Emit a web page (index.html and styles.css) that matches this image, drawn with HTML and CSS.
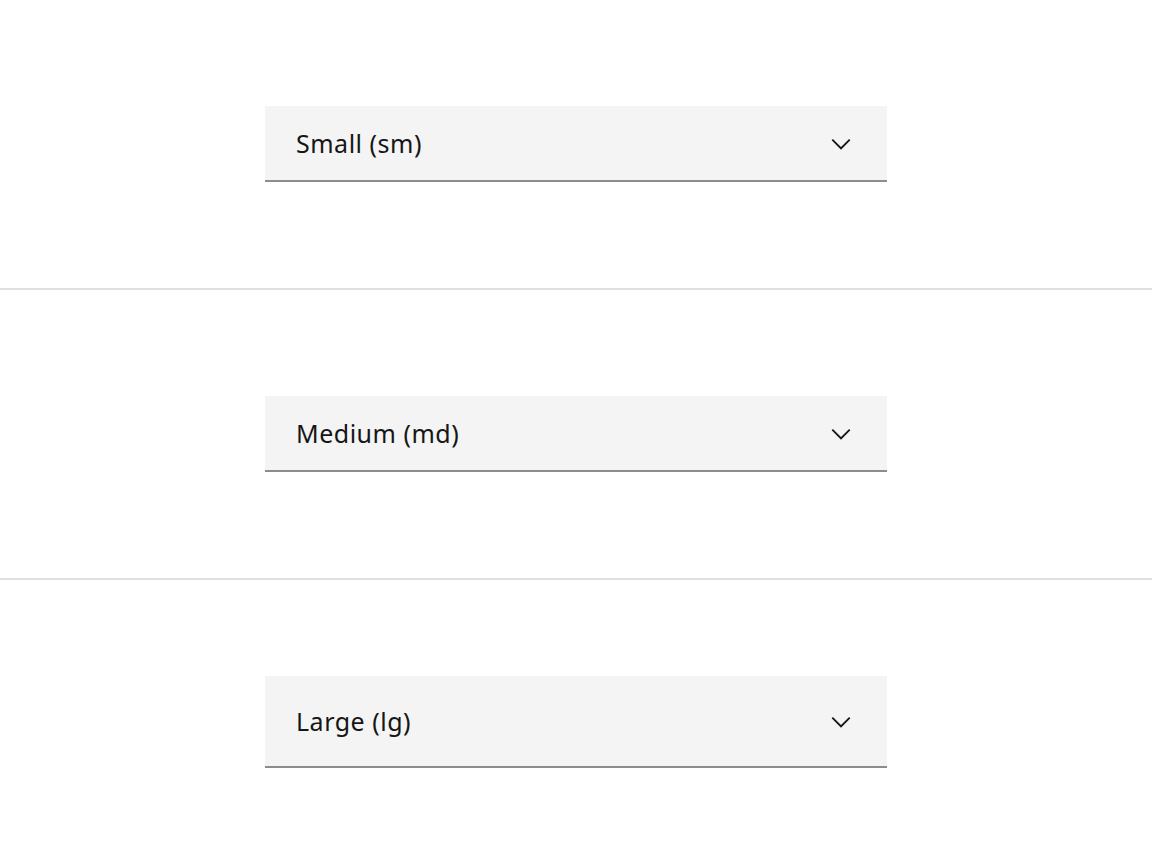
FILE: index.html
```html
<!DOCTYPE html>
<html>
<head>
<meta charset="utf-8">
<link rel="stylesheet" href="styles.css">
</head>
<body>
<div class="page">
  <section class="row">
    <div class="dropdown dd-sm">
      <span class="label">Small (sm)</span>
      <svg class="chev" viewBox="0 0 16 16" width="30" height="30"><path d="M8 11L3 6 3.7 5.3 8 9.6 12.3 5.3 13 6z"/></svg>
    </div>
  </section>
  <div class="divider"></div>
  <section class="row">
    <div class="dropdown dd-md">
      <span class="label">Medium (md)</span>
      <svg class="chev" viewBox="0 0 16 16" width="30" height="30"><path d="M8 11L3 6 3.7 5.3 8 9.6 12.3 5.3 13 6z"/></svg>
    </div>
  </section>
  <div class="divider"></div>
  <section class="row row-last">
    <div class="dropdown dd-lg">
      <span class="label">Large (lg)</span>
      <svg class="chev" viewBox="0 0 16 16" width="30" height="30"><path d="M8 11L3 6 3.7 5.3 8 9.6 12.3 5.3 13 6z"/></svg>
    </div>
  </section>
</div>
</body>
</html>
```
FILE: styles.css
```css
html, body {
  margin: 0;
  padding: 0;
  background: #ffffff;
}
body {
  font-family: "Noto Sans", "Open Sans", sans-serif;
  color: #161616;
}
.page {
  display: flex;
  flex-direction: column;
}
.row {
  height: 288px;
  display: flex;
  align-items: center;
  justify-content: center;
}
.row-last {
  height: 284px;
}
.divider {
  height: 2px;
  background: #e0e0e0;
}
.dropdown {
  box-sizing: border-box;
  width: 622px;
  height: 76px;
  background: #f4f4f4;
  border-bottom: 2px solid #8d8d8d;
  display: flex;
  align-items: center;
  justify-content: space-between;
  padding: 0 31px 0 31px;
}
.dd-lg {
  height: 92px;
}
.label {
  font-size: 25px;
  line-height: 1;
  letter-spacing: 0.5px;
  padding-top: 1px;
}
.chev {
  fill: #161616;
  display: block;
  margin-top: 1px;
}
```
